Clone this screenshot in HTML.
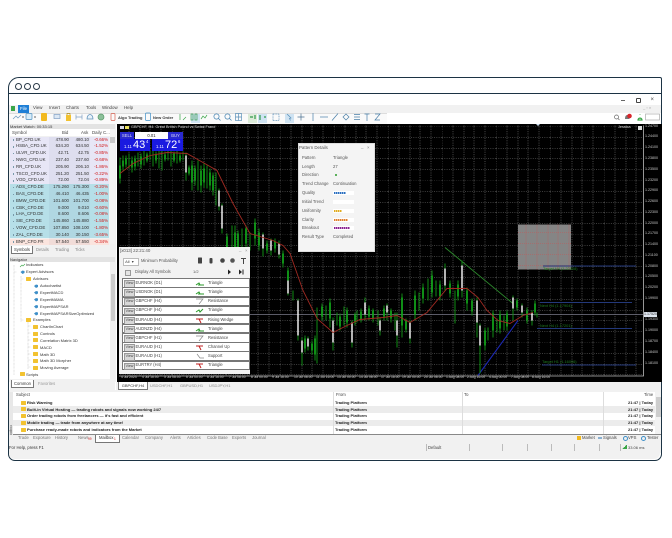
<!DOCTYPE html>
<html><head><meta charset="utf-8"><style>
html,body{margin:0;padding:0;background:#fff}
body{width:672px;height:538px;overflow:hidden;position:relative;font-family:"Liberation Sans",sans-serif;font-size:4.4px;color:#333;line-height:1}
div,span{position:absolute;white-space:nowrap}
#frame{left:8px;top:77px;width:652px;height:382px;border:1.2px solid #1c3344;border-radius:11px 2px 7px 7px;overflow:hidden;background:#fff}
.c{width:5px;height:5px;border:1.1px solid #2a3a48;border-radius:50%;top:83px;z-index:5}
#app{left:0;top:0;width:672px;height:538px;filter:blur(.25px)}
.m{top:106.3px;font-size:4.4px;color:#444}
.row{left:10px;width:99px;height:6.8px}
.row span{top:1.2px}
.s{left:6px;color:#333}.s:before{content:"";position:absolute;left:-3.5px;top:1.6px;width:1.6px;height:1.6px;background:#79a}
.b{right:40px}.a{right:20px}.d{right:1px;color:#d01818}
.n{left:0;font-size:4px;color:#333}
.f{width:5px;height:4px;background:#f2c230;border-radius:.5px}
.sr{left:122px;width:126px;height:7.4px;background:#fff;border:.8px solid #777}
.sr i{position:absolute;left:1px;top:.8px;width:9px;height:5.8px;background:#d8d8d8;border:.4px solid #999;font-style:normal;font-size:3.6px;text-align:center;line-height:5.8px;color:#444}
.sr b{position:absolute;left:12.5px;top:1.7px;font-weight:normal;color:#444;font-size:4.1px}
.sr u{position:absolute;left:85px;top:1.7px;text-decoration:none;color:#444;font-size:4.1px}
.sr svg{position:absolute;left:72px;top:.5px}
.pl{left:302px;color:#555;font-size:4.2px}.pv{left:333px;color:#555;font-size:4.2px}
.bar{left:333px;width:21px;height:4px;background:#fff}
.px{left:645px;font-size:3.6px;color:#ccc}
.dt{top:376.3px;font-size:3.4px;color:#ccc}
.mr{top:400.8px;left:27px;font-weight:bold;font-size:4px;color:#222}
.tb{top:436.3px;color:#777;font-size:4.2px}
.vs{top:444px;width:.6px;height:7px;background:#bbb}
</style></head><body>
<div class="c" style="left:15px"></div><div class="c" style="left:24px"></div><div class="c" style="left:33px"></div>
<div id="frame"></div>
<div id="app">
<div style="left:9px;top:93px;width:652px;height:1.2px;background:#1c3344"></div>
<div style="left:621px;top:100px;width:3.5px;height:.8px;background:#666"></div>
<div style="left:636px;top:98px;width:3px;height:3px;border:.8px solid #444;border-radius:1px"></div>
<div style="left:650.5px;top:96.5px;font-size:6px;color:#444">×</div>
<div style="left:9px;top:105px;width:652px;height:8px;background:#f1f1f1"></div>
<div style="left:11px;top:106px;width:4px;height:5px;background:#3aa648"></div>
<div style="left:18px;top:105px;width:11px;height:8px;background:#1e7fd6;color:#fff;font-size:4.4px;line-height:8px;text-align:center">File</div>
<div class="m" style="left:33px">View</div><div class="m" style="left:49px">Insert</div><div class="m" style="left:66px">Charts</div><div class="m" style="left:86px">Tools</div><div class="m" style="left:102px">Window</div><div class="m" style="left:124px">Help</div>
<div style="left:643px;top:106px;font-size:4px;color:#999">_ ▫ ×</div>
<div style="left:9px;top:113px;width:652px;height:10.5px;background:#fafafa;border-top:.6px solid #ddd"></div>
<div style="left:387px;top:113px;width:274px;height:10.5px;background:#fff"></div>
<div style="left:191px;top:113.5px;width:9px;height:9px;background:#cfe3f2"></div>
<div style="left:258px;top:113.5px;width:9px;height:9px;background:#cfe3f2"></div>
<div style="left:285px;top:113.5px;width:9px;height:9px;background:#cfe3f2"></div>
<div style="left:248px;top:113.5px;width:9px;height:9px;background:#dcebd8"></div>
<svg style="position:absolute;left:0;top:110px" width="672" height="14" fill="none" stroke-width=".7">
<path d="M13 9l3-3 2 2 3-3" stroke="#6c9ac0"/><rect x="26" y="3.5" width="6" height="6" rx="1" stroke="#4d8fc0" fill="#d8ecf8"/><path d="M22 7h2M34 7h2" stroke="#333"/>
<rect x="41" y="3" width="6" height="8" rx="1" fill="#f2b91e"/>
<rect x="54" y="4.500" width="6" height="4" stroke="#7f9fc4" fill="#dce8f4"/><rect x="66" y="5" width="5" height="6" fill="#f2c230"/><path d="M67 5V3.500h3V5" stroke="#b08a10"/>
<path d="M76 7h6M76 4.500v5M82 4.500v5" stroke="#7f9fc4"/><path d="M87 9c0-6 6-6 6 0z" stroke="#5c8fb8" fill="#e8f2fa"/>
<circle cx="101" cy="7" r="3" fill="#8cc09a" stroke="#5a9a6a"/>
<rect x="111" y="3.500" width="4" height="7" rx="1" stroke="#d86050"/>
<rect x="145.500" y="3" width="5" height="7.500" rx="1" stroke="#3e8fc8"/>
<path d="M180 10V4M183 10l3-3" stroke="#3aa648"/><path d="M191 4h2v6h-2zM195 4h2v6h-2z" stroke="#3a9a50"/><path d="M201 9l2-3 2 2 2-3" stroke="#3aa648"/>
<circle cx="216.500" cy="6.500" r="2.600" stroke="#3e7fb0"/><path d="M218.500 8.500l2 2" stroke="#3e7fb0"/><circle cx="227.500" cy="6.500" r="2.600" stroke="#3e7fb0"/><path d="M229.500 8.500l2 2" stroke="#3e7fb0"/>
<rect x="235.500" y="3.500" width="6" height="7" stroke="#5a8fb8"/><path d="M235.500 7h6M238.500 3.500v7" stroke="#5a8fb8"/>
<path d="M250 7h3M255 5v4M260 5v5M264 7h2" stroke="#2f9a4a" stroke-width="1.200"/>
<rect x="273" y="4" width="6" height="6.500" stroke="#5a8fb8" stroke-dasharray="1 .6"/>
<path d="M287 4l4 4-1.500.5 1 2" stroke="#5a8fb8"/><path d="M301 3.500v7M297.500 7h7" stroke="#4a6f90"/>
<path d="M313 3v8" stroke="#4a7fa8"/><path d="M320 7h8" stroke="#4a7fa8"/><path d="M332 10.500l6-7" stroke="#4a7fa8"/><path d="M343 7l3-3 3 3-3 3z" stroke="#4a7fa8"/><path d="M354 4.500h6M354 7h6M354 9.500h6" stroke="#4a7fa8"/><path d="M364.500 4h5M367 4v7" stroke="#4a7fa8"/><path d="M375 4h5l-5 6h5" stroke="#4a7fa8"/>
<circle cx="616.500" cy="7" r="2" stroke="#666"/><path d="M618 8.500l1.500 1.500" stroke="#666"/>
<path d="M625 9c0-3 1-4 2.500-4s2 2 2 4z" fill="#777"/><circle cx="629.500" cy="6" r="2.300" fill="#d8262c"/>
<path d="M640 4.500v.5M638 10c0-2.500 4-2.500 4 0z" stroke="#3aa648" stroke-width="1.200"/><rect x="645.500" y="4" width="14" height="6" stroke="#aaa"/>
</svg>
<div style="left:118px;top:115.500px;font-size:4px;color:#333;font-weight:bold">Algo Trading</div>
<div style="left:153px;top:115.500px;font-size:4px;color:#333;font-weight:bold">New Order</div>

<div style="left:9px;top:123.500px;width:107px;height:258px;background:#f1f1f1"></div>
<div style="left:10px;top:123.500px;width:105px;height:5px;background:#e3e3e3;font-size:4px;line-height:5px;color:#333">Market Watch: 00:33:15</div>
<div style="left:10px;top:129px;width:105px;height:7px;background:#fff"></div>
<div style="left:12px;top:131px;color:#444">Symbol</div><div style="left:62px;top:131px;color:#444">Bid</div><div style="left:81px;top:131px;color:#444">Ask</div><div style="left:92px;top:131px;color:#444">Daily C...</div>
<div style="left:109.500px;top:129px;width:5.500px;height:115px;background:#f3f3f3"></div>
<div style="left:110px;top:137px;width:4.500px;height:6px;background:#c8c8c8"></div>
<div style="left:10px;top:136.500px;width:99px;height:47.600px;background:#e7e6f6"></div>
<div style="left:10px;top:184.100px;width:99px;height:54.400px;background:#b6dfe8"></div>
<div style="left:10px;top:238.500px;width:99px;height:6.800px;background:#fbe4de"></div>
<div style="left:49px;top:136.500px;width:41px;height:108.800px;background:rgba(90,100,130,.06)"></div>
<div class="row" style="top:136.500px"><span class="s">BP_CFD.UK</span><span class="b">478.90</span><span class="a">480.10</span><span class="d">-0.66%</span></div>
<div class="row" style="top:143.300px"><span class="s">HSBA_CFD.UK</span><span class="b">634.20</span><span class="a">634.50</span><span class="d">-1.52%</span></div>
<div class="row" style="top:150.100px"><span class="s">ULVR_CFD.UK</span><span class="b">42.71</span><span class="a">42.75</span><span class="d">-0.85%</span></div>
<div class="row" style="top:156.900px"><span class="s">NWG_CFD.UK</span><span class="b">237.40</span><span class="a">237.60</span><span class="d">-0.68%</span></div>
<div class="row" style="top:163.700px"><span class="s">RR_CFD.UK</span><span class="b">205.90</span><span class="a">206.10</span><span class="d">-1.86%</span></div>
<div class="row" style="top:170.500px"><span class="s">TSCO_CFD.UK</span><span class="b">251.20</span><span class="a">251.50</span><span class="d">-0.22%</span></div>
<div class="row" style="top:177.300px"><span class="s">VOD_CFD.UK</span><span class="b">72.00</span><span class="a">72.04</span><span class="d">-0.89%</span></div>
<div class="row" style="top:184.100px"><span class="s">ADS_CFD.DE</span><span class="b">175.260</span><span class="a">175.300</span><span class="d">-0.20%</span></div>
<div class="row" style="top:190.900px"><span class="s">BAS_CFD.DE</span><span class="b">46.410</span><span class="a">46.435</span><span class="d">-1.00%</span></div>
<div class="row" style="top:197.700px"><span class="s">BMW_CFD.DE</span><span class="b">101.600</span><span class="a">101.700</span><span class="d">-0.08%</span></div>
<div class="row" style="top:204.500px"><span class="s">CBK_CFD.DE</span><span class="b">9.000</span><span class="a">9.010</span><span class="d">-0.60%</span></div>
<div class="row" style="top:211.300px"><span class="s">LHA_CFD.DE</span><span class="b">8.600</span><span class="a">8.606</span><span class="d">-0.08%</span></div>
<div class="row" style="top:218.100px"><span class="s">SIE_CFD.DE</span><span class="b">145.860</span><span class="a">145.880</span><span class="d">-1.55%</span></div>
<div class="row" style="top:224.900px"><span class="s">VOW_CFD.DE</span><span class="b">107.850</span><span class="a">108.100</span><span class="d">-1.80%</span></div>
<div class="row" style="top:231.700px"><span class="s">ZAL_CFD.DE</span><span class="b">30.140</span><span class="a">30.150</span><span class="d">-3.65%</span></div>
<div class="row" style="top:238.500px"><span class="s">BNP_CFD.FR</span><span class="b">57.540</span><span class="a">57.550</span><span class="d">-0.34%</span></div>
<div style="left:11px;top:245.500px;width:20px;height:7px;background:#fff;border:.6px solid #777;border-top:0;font-size:4.200px;line-height:7px;text-align:center">Symbols</div>
<div style="left:36px;top:248px;color:#888;font-size:4.200px">Details</div><div style="left:55px;top:248px;color:#888;font-size:4.200px">Trading</div><div style="left:75px;top:248px;color:#888;font-size:4.200px">Ticks</div>

<div style="left:10px;top:256.500px;width:105px;height:5.500px;background:#e3e3e3;font-size:4px;line-height:5.500px">Navigator</div>
<div style="left:10px;top:262px;width:105px;height:117px;background:#fff"></div>
<div style="left:110px;top:262px;width:5px;height:117px;background:#f0f0f0"></div>
<div style="left:110.500px;top:274px;width:4px;height:47px;background:#cdcdcd"></div>
<div class="n" style="left:26px;top:263px">Indicators</div>
<div class="n" style="left:26px;top:270px">Expert Advisors</div>
<div class="f" style="left:26px;top:277px"></div><div class="n" style="left:33px;top:277px">Advisors</div>
<div class="n" style="left:40px;top:284px">Autochartist</div>
<div class="n" style="left:40px;top:290.500px">ExpertMACD</div>
<div class="n" style="left:40px;top:297.500px">ExpertMAMA</div>
<div class="n" style="left:40px;top:304.500px">ExpertMAPSAR</div>
<div class="n" style="left:40px;top:311.500px">ExpertMAPSARSizeOptimized</div>
<div class="f" style="left:26px;top:318px"></div><div class="n" style="left:33px;top:318px">Examples</div>
<div class="f" style="left:33px;top:324.500px"></div><div class="n" style="left:40px;top:324.500px">ChartInChart</div>
<div class="f" style="left:33px;top:331.500px"></div><div class="n" style="left:40px;top:331.500px">Controls</div>
<div class="f" style="left:33px;top:338px"></div><div class="n" style="left:40px;top:338.500px">Correlation Matrix 3D</div>
<div class="f" style="left:33px;top:345px"></div><div class="n" style="left:40px;top:345.500px">MACD</div>
<div class="f" style="left:33px;top:352px"></div><div class="n" style="left:40px;top:352.500px">Math 3D</div>
<div class="f" style="left:33px;top:358.500px"></div><div class="n" style="left:40px;top:358.500px">Math 3D Morpher</div>
<div class="f" style="left:33px;top:365.500px"></div><div class="n" style="left:40px;top:365.500px">Moving Average</div>
<div class="f" style="left:20px;top:372px"></div><div class="n" style="left:26px;top:372.500px">Scripts</div>
<svg style="position:absolute;left:0;top:260px" width="40" height="120" fill="none" stroke-width=".6">
<path d="M20 7l2-2 1 1 2-2" stroke="#3aa648"/><path d="M20.500 12l2-1.500 2 .5v2l-2 1z" fill="#3e8fc8"/>
<path d="M34 26l2-1.500 2 .5v2l-2 1zM34 32.500l2-1.500 2 .5v2l-2 1zM34 39.500l2-1.500 2 .5v2l-2 1zM34 46.500l2-1.500 2 .5v2l-2 1zM34 53.500l2-1.500 2 .5v2l-2 1z" fill="#3e8fc8"/>
<path d="M14 5v110M14 12h3M21 16v46M21 19h3M21 60h3M28 62v47M28 66h3M28 73h3M28 80h3M28 87h3M28 94h3M28 100h3M28 107h3" stroke="#bbb" stroke-dasharray=".7 .7"/>
</svg>
<div style="left:10px;top:379px;width:105px;height:11px;background:#f1f1f1"></div>
<div style="left:11px;top:380px;width:21px;height:7px;background:#fff;border:.6px solid #777;border-top:0;font-size:4.200px;line-height:7px;text-align:center">Common</div>
<div style="left:38px;top:382px;color:#999;font-size:4.200px">Favorites</div>

<svg style="position:absolute;left:117px;top:123.500px" width="545" height="258" viewBox="117 123.500 545 258">
<defs><pattern id="g" x="10" y="126" width="54" height="54" patternUnits="userSpaceOnUse">
<g stroke="#7a7a7a" stroke-width=".6" stroke-dasharray="1 1.300" fill="none">
<path d="M0 0h54M0 11h54M0 22h54M0 32h54M0 43h54"/><path d="M0 0v54M11 0v54M22 0v54M32 0v54M43 0v54"/></g></pattern></defs>
<rect x="117" y="123" width="545" height="259" fill="#000"/>
<rect x="119" y="125" width="524" height="250" fill="url(#g)"/>
<path d="M119 375.500H643.500V125" stroke="#bbb" stroke-width=".8" fill="none"/>
<path d="M119 314H643" stroke="#7a7a8a" stroke-width=".7"/>
<rect x="518" y="224" width="53" height="45" fill="#858585"/>
<path d="M518 232h53M518 243h53M518 254h53M518 265h53M526 224v45M537 224v45M548 224v45M558 224v45M569 224v45" stroke="#c05a5a" stroke-width=".6" stroke-dasharray="1 1"/>
<path d="M543 265.500H636M540 302H632M537 328H632M542 364.500H636" stroke="#23387a" stroke-width="1"/>
<path d="M445 247L513 303" stroke="#2d8a2d" stroke-width=".9" fill="none"/>
<path d="M478 375L518 320" stroke="#1c28b4" stroke-width="1.100" fill="none"/>
<path stroke="#0f8c14" stroke-width="1" fill="none" d="M120 157V183M123 155V170M126 155V167M129 153V168M132 156V172M135 155V170M138 152V166M141 153V168M144 150V165M147 152V162M150 150V160M153 150V166M156 151V163M159 150V168M162 150V170M165 151V161M168 150V160M171 150V166M174 151V162M177 150V163M180 152V162M183 151V160M186 152V180M189 165V175M192 160V190M195 165V185M198 160V190M201 165V192M204 163V187M207 165V188M210 168V190M213 172V195M216 172V205M219 188V210M222 203V233M227 233V252M232 225V250M235 225V255M238 230V252M242 228V250M246 225V248M250 232V250M255 218V245M259 228V250M263 232V256M267 240V253M271 238V255M275 238V252M279 240V258M283 250V267M288 267V295M293 290V300M298 298V340M302 337V365M305 335V352M308 336V350M312 340V354M315 335V360M317 307V363M322 303V320M326 305V320M330 298V327M333 317V350M337 312V325M340 313V330M344 306V325M347 307V327M352 320V347M355 312V325M357 310V322M361 308V322M365 297V320M369 305V320M373 308V322M378 310V325M380 317V335M384 305V320M387 303V320M391 308V322M395 312V330M397 312V347M402 293V337M406 318V332M410 320V343M415 290V320M419 292V310M423 283V303M428 278V300M432 270V297M436 280V296M440 280V300M445 263V290M450 280V297M455 290V323M458 280V300M462 260V297M467 287V310M472 298V315M477 297V337M480 323V373M485 327V350M488 327V340M493 310V337M497 318V332M500 310V333M504 315V330M507 310V330M513 295V320M517 298V310M522 303V317M527 307V323M532 310V325M535 300V315M537 312V317"/>
<path stroke="#12a81a" stroke-width="1.700" fill="none" d="M120 165V178M123 160V166M126 158V164M132 160V167M135 158V166M141 156V164M147 154V160M156 154V160M165 154V159M174 153V160M180 155V160M189 167V173M192 165V182M195 168V180M201 170V185M204 168V182M210 172V185M213 175V190M227 236V247M235 232V250M238 233V248M246 228V243M255 222V238M259 232V245M267 243V250M275 241V248M283 253V263M288 270V280M305 338V348M312 343V350M315 338V354M322 306V316M330 302V318M340 316V326M347 310V322M355 314V322M361 311V319M369 308V316M373 310V318M384 308V316M391 310V318M402 297V325M406 320V329M415 295V314M423 287V298M432 275V292M440 284V296M450 283V293M458 284V296M467 290V303M472 300V311M485 330V345M493 313V330M500 314V328M507 313V326M517 300V307M527 310V320M535 303V312"/>
<path stroke="#fff" stroke-width="1.400" fill="none" d="M186 155V172M219 190V206M222 205V228M263 234V248M271 240V250M279 243V254M288 280V293M298 300V335M302 340V352M308 338V346M333 320V342M352 322V342M365 302V314M380 320V330M387 305V312M397 320V335M410 322V338M445 268V285M462 265V290M477 300V322M480 325V345M513 297V308M522 305V312M532 312V320"/>
<path d="M120 173L133 163L150 155L167 152L187 153L203 162L217 170L233 203L250 233L273 240L283 245L290 253L303 290L317 318L333 332L347 325L360 319L383 317L397 315L410 322L427 312L447 288L460 288L467 288L478 297L487 310L498 320L510 323L523 315L533 312" fill="none" stroke="#a02a22" stroke-width=".9"/>
<path d="M536 123.500h4l-2 2z" fill="#cde"/>
</svg>
<div style="left:543px;top:266.500px;font-size:3.900px;color:#1f7a20">Target H4 (1.22508)</div>
<div style="left:540px;top:303.500px;font-size:3.900px;color:#1f7a20">Next H4 (1.17904)</div>
<div style="left:540px;top:324px;font-size:3.900px;color:#1f7a20">Next H4 (1.17201)</div>
<div style="left:542px;top:360px;font-size:3.900px;color:#1f7a20">Target H1 (1.16006)</div>
<div style="left:618px;top:126px;font-size:3.800px;color:#ddd">Jessica</div><div style="left:638px;top:126px;width:4px;height:3.500px;background:#ddd"></div>
<div class="px" style="top:124.500px">1.24700</div><div class="px" style="top:135px">1.24400</div><div class="px" style="top:146px">1.24100</div><div class="px" style="top:157px">1.23800</div><div class="px" style="top:167.500px">1.23500</div><div class="px" style="top:178.500px">1.23200</div><div class="px" style="top:189px">1.22900</div><div class="px" style="top:200px">1.22600</div><div class="px" style="top:211px">1.22300</div><div class="px" style="top:221.500px">1.22000</div><div class="px" style="top:232px">1.21700</div><div class="px" style="top:243px">1.21400</div><div class="px" style="top:254px">1.21100</div><div class="px" style="top:264.500px">1.20800</div><div class="px" style="top:275px">1.20500</div><div class="px" style="top:286px">1.20200</div><div class="px" style="top:297px">1.19900</div><div class="px" style="top:318px">1.19300</div><div class="px" style="top:329px">1.19000</div><div class="px" style="top:340px">1.18700</div><div class="px" style="top:351px">1.18400</div><div class="px" style="top:362px">1.18100</div>
<div style="left:644px;top:312px;width:13px;height:4.500px;background:#dfe6ef;color:#333;font-size:3.600px;line-height:4.500px">1.17520</div>
<div class="dt" style="left:121px">4 Jul 2023</div><div class="dt" style="left:142px">4 Jul 16:00</div><div class="dt" style="left:164px">5 Jul 08:00</div><div class="dt" style="left:186px">6 Jul 00:00</div><div class="dt" style="left:207px">6 Jul 16:00</div><div class="dt" style="left:229px">7 Jul 08:00</div><div class="dt" style="left:251px">8 Jul 00:00</div><div class="dt" style="left:272px">9 Jul 16:00</div><div class="dt" style="left:294px">10 Jul 08:00</div><div class="dt" style="left:316px">11 Jul 16:00</div><div class="dt" style="left:337px">13 Jul 00:00</div><div class="dt" style="left:359px">14 Jul 08:00</div><div class="dt" style="left:381px">17 Jul 16:00</div><div class="dt" style="left:402px">19 Jul 00:00</div><div class="dt" style="left:424px">20 Jul 08:00</div><div class="dt" style="left:446px">1 Aug 08:00</div><div class="dt" style="left:467px">2 Aug 16:00</div><div class="dt" style="left:489px">4 Aug 00:00</div><div class="dt" style="left:511px">7 Aug 08:00</div><div class="dt" style="left:532px">8 Aug 16:00</div>

<div style="left:120px;top:125.500px;width:3.500px;height:3.500px;background:#d8d8e8"></div><div style="left:125px;top:125.500px;width:3.500px;height:3.500px;background:#e8e060"></div>
<div style="left:131px;top:125.800px;font-size:3.800px;color:#ddd">GBPCHF, H4: Great British Pound vs Swiss Franc</div>
<div style="left:120px;top:131.500px;width:14px;height:7px;background:#2a2ad0;color:#dde;font-size:4.200px;line-height:7px;text-align:center">SELL</div>
<div style="left:135px;top:131.500px;width:33px;height:7px;background:#fff;color:#222;font-size:4.200px;line-height:7px;text-align:center">0.01</div>
<div style="left:168px;top:131.500px;width:15px;height:7px;background:#2a2ad0;color:#dde;font-size:4.200px;line-height:7px;text-align:center">BUY</div>
<div style="left:120px;top:139px;width:30px;height:12px;background:#1a1ae0"></div>
<div style="left:152px;top:139px;width:31px;height:12px;background:#1a1ae0"></div>
<div style="left:124px;top:144.500px;color:#fff;font-size:4.200px">1.11</div><div style="left:133px;top:139.500px;color:#fff;font-size:11px">43</div><div style="left:146px;top:140px;color:#fff;font-size:4.200px">4</div>
<div style="left:156px;top:144.500px;color:#fff;font-size:4.200px">1.11</div><div style="left:165px;top:139.500px;color:#fff;font-size:11px">72</div><div style="left:178px;top:140px;color:#fff;font-size:4.200px">6</div>

<div style="left:298px;top:143px;width:75px;height:106.500px;background:#f4f4f4;border:.4px solid #ddd"></div>
<div class="pl" style="left:299px;top:145.800px;font-size:4.400px">Pattern Details</div><div style="left:361px;top:145px;color:#888">_</div><div style="left:367px;top:145.500px;color:#888">×</div>
<div class="pl" style="top:156px">Pattern</div><div class="pv" style="top:156px">Triangle</div>
<div class="pl" style="top:164.500px">Length</div><div class="pv" style="top:164.500px">27</div>
<div class="pl" style="top:173px">Direction</div><div style="left:334.500px;top:173.500px;width:2.500px;height:2.500px;background:#2a9a2a;border-radius:1px"></div>
<div class="pl" style="top:182px">Trend Change</div><div class="pv" style="top:182px">Continuation</div>
<div class="pl" style="top:191px">Quality</div><div class="bar" style="top:191px"></div><div style="left:334px;top:192px;width:12px;height:2.200px;background:repeating-linear-gradient(90deg,#2a6fc0 0 1.300px,#fff 1.300px 2px)"></div>
<div class="pl" style="top:200px">Initial Trend</div><div class="bar" style="top:200px"></div>
<div class="pl" style="top:208.500px">Uniformity</div><div class="bar" style="top:208.500px"></div><div style="left:334px;top:209.500px;width:8px;height:2.200px;background:repeating-linear-gradient(90deg,#e0ac20 0 1.300px,#fff 1.300px 2px)"></div>
<div class="pl" style="top:217.500px">Clarity</div><div class="bar" style="top:217.500px"></div><div style="left:334px;top:218.500px;width:14px;height:2.200px;background:repeating-linear-gradient(90deg,#e08030 0 1.300px,#fff 1.300px 2px)"></div>
<div class="pl" style="top:226px">Breakout</div><div class="bar" style="top:226px"></div><div style="left:334px;top:227px;width:16px;height:2.200px;background:repeating-linear-gradient(90deg,#8a2090 0 1.300px,#fff 1.300px 2px)"></div>
<div class="pl" style="top:235px">Result Type</div><div class="pv" style="top:235px">Completed</div>

<div style="left:119px;top:247px;width:131px;height:126.500px;background:#f2f2f2"></div>
<div style="left:120px;top:249px;color:#555;font-size:4.400px">[x013] 22:21:40</div><div style="left:239px;top:248px;color:#999">_</div><div style="left:245px;top:249px;color:#999">×</div>
<div style="left:123px;top:258px;width:14px;height:6px;background:#fff;border:.4px solid #bbb;font-size:4px;line-height:6px;color:#444">&nbsp;All &nbsp;▾</div>
<div style="left:141px;top:259px;color:#555;font-size:4.100px">Minimum Probability</div>
<svg style="position:absolute;left:195px;top:256px" width="55" height="10" fill="#444"><rect x="3" y="1.500" width="4" height="6" rx=".5"/><rect x="14.500" y="2" width="3" height="5.500" rx="1"/><circle cx="27.500" cy="4.500" r="2.300"/><circle cx="37.500" cy="4.500" r="2.300" fill="#555"/><path d="M46 2h5v1h-2v5h-1V3h-2z"/></svg>
<div style="left:124.500px;top:270px;width:4px;height:4px;background:#e4e4e4;border:.4px solid #999"></div>
<div style="left:135px;top:270px;color:#555;font-size:4.100px">Display All Symbols</div><div style="left:193px;top:270px;color:#555;font-size:4px">1/2</div>
<svg style="position:absolute;left:226px;top:269px" width="20" height="6" fill="#222"><path d="M2 .5l3 2.500-3 2.500zM13 .5l3 2.500-3 2.500zM16.500 .5h1v5h-1z"/></svg>
<div class="sr" style="top:278.200px"><i>View</i><b>EURNOK (D1)</b><u>Triangle</u><svg width="10" height="7" fill="none"><path d="M1 5l3-2 1 2M3 5h6" stroke="#2a9a2a" stroke-width="1"/></svg></div>
<div class="sr" style="top:287.400px"><i>View</i><b>USDNOK (D1)</b><u>Triangle</u><svg width="10" height="7" fill="none"><path d="M1 5l3-2 1 2M3 5h6" stroke="#2a9a2a" stroke-width="1"/></svg></div>
<div class="sr" style="top:296.500px"><i>View</i><b>GBPCHF (H4)</b><u>Resistance</u><svg width="10" height="7" fill="none"><path d="M1 1h7L4 6" stroke="#888" stroke-width=".7"/></svg></div>
<div class="sr" style="top:305.800px"><i>View</i><b>GBPCHF (H4)</b><u>Triangle</u><svg width="10" height="7" fill="none"><path d="M1 5l3-2 1 2 3-3" stroke="#2a9a2a" stroke-width="1"/></svg></div>
<div class="sr" style="top:315px"><i>View</i><b>EURAUD (H4)</b><u>Rising Wedge</u><svg width="10" height="7" fill="none"><path d="M1 2h7M4 2l2 4" stroke="#c02020" stroke-width="1"/></svg></div>
<div class="sr" style="top:324px"><i>View</i><b>AUDNZD (H4)</b><u>Triangle</u><svg width="10" height="7" fill="none"><path d="M1 5l3-2 1 2M3 5h6" stroke="#2a9a2a" stroke-width="1"/></svg></div>
<div class="sr" style="top:333.300px"><i>View</i><b>GBPCHF (H1)</b><u>Resistance</u><svg width="10" height="7" fill="none"><path d="M1 1h7L4 6" stroke="#888" stroke-width=".7"/></svg></div>
<div class="sr" style="top:342.400px"><i>View</i><b>EURAUD (H1)</b><u>Channel Up</u><svg width="10" height="7" fill="none"><path d="M1 2h7M4 2l2 4" stroke="#c02020" stroke-width="1"/></svg></div>
<div class="sr" style="top:351.400px"><i>View</i><b>EURAUD (H1)</b><u>Support</u><svg width="10" height="7" fill="none"><path d="M2 1l3 4h4" stroke="#888" stroke-width=".7"/></svg></div>
<div class="sr" style="top:360.800px"><i>View</i><b>EURTRY (H4)</b><u>Triangle</u><svg width="10" height="7" fill="none"><path d="M1 2h7M4 2l2 4" stroke="#c02020" stroke-width="1"/></svg></div>

<div style="left:116px;top:382px;width:545px;height:11px;background:#f1f1f1"></div>
<div style="left:118px;top:381.500px;width:28px;height:7px;background:#fff;border:.6px solid #777;border-top:0;font-size:4px;line-height:7px;text-align:center">GBPCHF,H4</div>
<div style="left:150px;top:384px;color:#888;font-size:4px">USDCHF,H1</div><div style="left:180px;top:384px;color:#888;font-size:4px">GBPUSD,H1</div><div style="left:209px;top:384px;color:#888;font-size:4px">USDJPY,H1</div>

<div style="left:9px;top:390px;width:652px;height:3px;background:#f1f1f1"></div>
<div style="left:9px;top:392px;width:4px;height:43px;background:#e8e8e8"></div>
<div style="font-size:3.500px;color:#444;transform:rotate(-90deg);transform-origin:2px 2px;left:9.500px;top:433px">Toolbox</div>
<div style="left:13px;top:392px;width:648px;height:42.500px;background:#fff"></div>
<div style="left:13px;top:405.800px;width:642px;height:6.900px;background:#ececec"></div>
<div style="left:13px;top:419.500px;width:642px;height:6.900px;background:#ececec"></div>
<div style="left:333px;top:392px;width:.5px;height:42px;background:#ddd"></div><div style="left:461.500px;top:392px;width:.5px;height:42px;background:#ddd"></div><div style="left:603px;top:392px;width:.5px;height:42px;background:#ddd"></div>
<div style="left:655px;top:392px;width:6px;height:42px;background:#f2f2f2"></div><div style="left:656px;top:397px;width:4.500px;height:20px;background:#cdcdcd"></div>
<div style="left:13px;top:434px;width:648px;height:.9px;background:#888"></div>
<div style="left:16px;top:393.300px;color:#444;font-size:4.200px">Subject</div><div style="left:336px;top:393.300px;color:#444;font-size:4.200px">From</div><div style="left:464px;top:393.300px;color:#444;font-size:4.200px">To</div><div style="left:644px;top:393.300px;color:#444;font-size:4.200px">Time</div>
<div class="f" style="left:21px;top:400.500px"></div><div class="mr">Risk Warning</div><div class="mr" style="left:335px">Trading Platform</div><div class="mr" style="left:628px">21:47 | Today</div>
<div class="f" style="left:21px;top:407.300px"></div><div class="mr" style="top:407.600px">Built-in Virtual Hosting — trading robots and signals now working 24/7</div><div class="mr" style="left:335px;top:407.600px">Trading Platform</div><div class="mr" style="left:628px;top:407.600px">21:47 | Today</div>
<div class="f" style="left:21px;top:414px"></div><div class="mr" style="top:414.300px">Order trading robots from freelancers — it's fast and efficient</div><div class="mr" style="left:335px;top:414.300px">Trading Platform</div><div class="mr" style="left:628px;top:414.300px">21:47 | Today</div>
<div class="f" style="left:21px;top:421px"></div><div class="mr" style="top:421.300px">Mobile trading — trade from anywhere at any time!</div><div class="mr" style="left:335px;top:421.300px">Trading Platform</div><div class="mr" style="left:628px;top:421.300px">21:47 | Today</div>
<div class="f" style="left:21px;top:427.800px"></div><div class="mr" style="top:428px">Purchase ready-made robots and indicators from the Market</div><div class="mr" style="left:335px;top:428px">Trading Platform</div><div class="mr" style="left:628px;top:428px">21:47 | Today</div>

<div style="left:9px;top:435px;width:652px;height:7.500px;background:#f1f1f1"></div>
<div class="tb" style="left:18px">Trade</div><div class="tb" style="left:33px">Exposure</div><div class="tb" style="left:55px">History</div><div class="tb" style="left:78px">News</div><div class="tb" style="left:88px;color:#d02020;font-size:3.200px;top:438px">99</div>
<div style="left:95px;top:434.500px;width:23px;height:7.500px;background:#fff;border:.6px solid #777;border-top:0"></div><div class="tb" style="left:99px;color:#333">Mailbox</div><div class="tb" style="left:114px;color:#d02020;font-size:3.200px;top:438px">1</div>
<div class="tb" style="left:122px">Calendar</div><div class="tb" style="left:145px">Company</div><div class="tb" style="left:170px">Alerts</div><div class="tb" style="left:187px">Articles</div><div class="tb" style="left:207px">Code Base</div><div class="tb" style="left:232px">Experts</div><div class="tb" style="left:252px">Journal</div>
<div style="left:577px;top:436px;width:3.500px;height:4px;background:#f2b91e"></div><div class="tb" style="left:582px;color:#444">Market</div>
<div style="left:598px;top:437px;width:4px;height:2px;background:#8ab0d0"></div><div class="tb" style="left:603px;color:#444">Signals</div>
<div style="left:623px;top:436px;width:3px;height:3px;border:.8px solid #3e8fc8;border-radius:50%"></div><div class="tb" style="left:628px;color:#444">VPS</div>
<div style="left:641px;top:436px;width:3px;height:3px;border:.8px solid #3e8fc8;border-radius:50%"></div><div class="tb" style="left:647px;color:#444">Tester</div>
<div style="left:9px;top:442.500px;width:652px;height:10px;background:#f1f1f1"></div>
<div style="left:9px;top:445.500px;font-size:4.200px;color:#333">For Help, press F1</div>
<div style="left:428px;top:445.500px;font-size:4.200px;color:#444">Default</div>
<div class="vs" style="left:426px"></div><div class="vs" style="left:469px"></div><div class="vs" style="left:502px"></div><div class="vs" style="left:527px"></div><div class="vs" style="left:551px"></div><div class="vs" style="left:574px"></div><div class="vs" style="left:599px"></div><div class="vs" style="left:620px"></div>
<div style="left:622px;top:445px;width:5px;height:4px;background:linear-gradient(135deg,transparent 50%,#3aa648 50%)"></div>
<div style="left:628px;top:445.500px;font-size:4px;color:#444">33.06 ms</div>
<div style="left:9px;top:452.500px;width:651px;height:6px;background:#f1f1f1;border-radius:0 0 6px 6px"></div>
</div>
</body></html>
